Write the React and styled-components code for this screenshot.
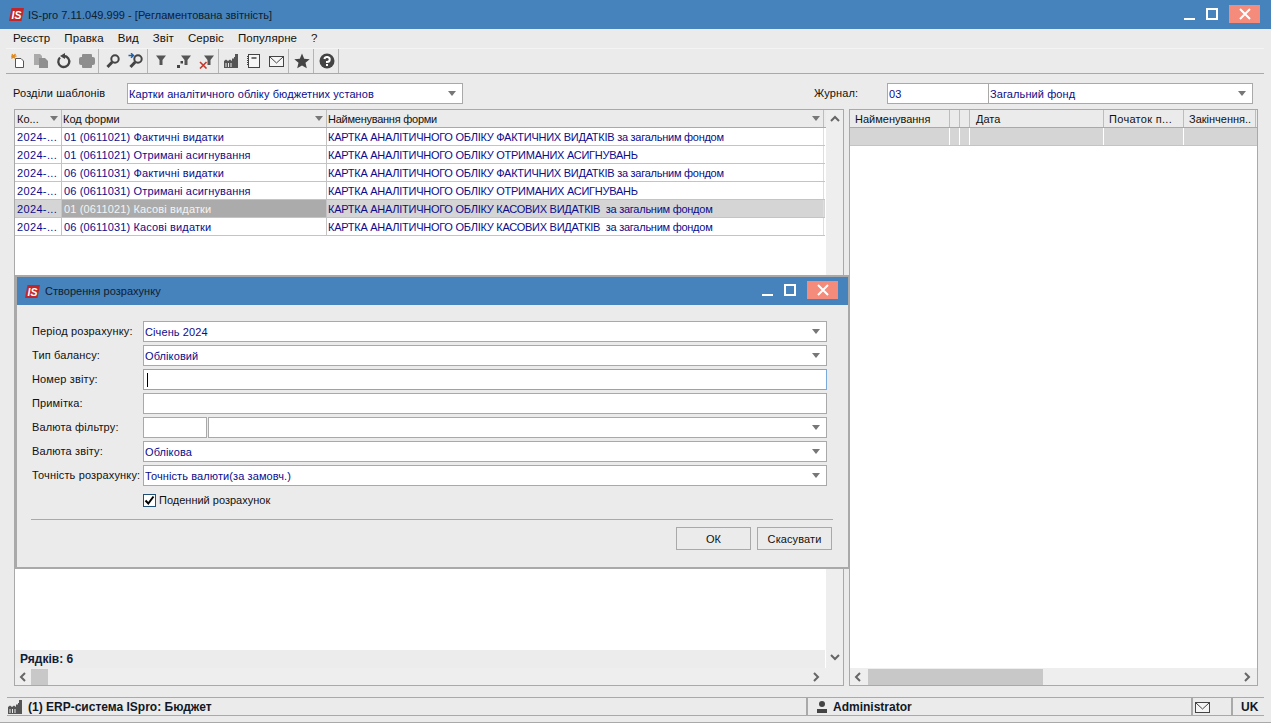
import React from 'react';
import styled, { createGlobalStyle } from 'styled-components';

const Global = createGlobalStyle`
  html, body { margin: 0; padding: 0; background: #ebebeb; overflow: hidden; }
  * { box-sizing: border-box; }
`;

const menuItems = ['Реєстр', 'Правка', 'Вид', 'Звіт', 'Сервіс', 'Популярне', '?'];

const rows = [
  ['2024-...', '01 (0611021) Фактичні видатки', 'КАРТКА АНАЛІТИЧНОГО ОБЛІКУ ФАКТИЧНИХ ВИДАТКІВ за загальним фондом'],
  ['2024-...', '01 (0611021) Отримані асигнування', 'КАРТКА АНАЛІТИЧНОГО ОБЛІКУ ОТРИМАНИХ АСИГНУВАНЬ'],
  ['2024-...', '06 (0611031) Фактичні видатки', 'КАРТКА АНАЛІТИЧНОГО ОБЛІКУ ФАКТИЧНИХ ВИДАТКІВ за загальним фондом'],
  ['2024-...', '06 (0611031) Отримані асигнування', 'КАРТКА АНАЛІТИЧНОГО ОБЛІКУ ОТРИМАНИХ АСИГНУВАНЬ'],
  ['2024-...', '01 (0611021) Касові видатки', 'КАРТКА АНАЛІТИЧНОГО ОБЛІКУ КАСОВИХ ВИДАТКІВ  за загальним фондом', true],
  ['2024-...', '06 (0611031) Касові видатки', 'КАРТКА АНАЛІТИЧНОГО ОБЛІКУ КАСОВИХ ВИДАТКІВ  за загальним фондом'],
];

const Page = styled.div`
  position: relative;
  width: 1271px;
  height: 723px;
  background: #ebebeb;
  border-bottom: 1px solid #a9a9a9;
  font-family: "Liberation Sans", Arial, sans-serif;
  font-size: 11px;
  color: #111;
  display: flex;
  flex-direction: column;
  overflow: hidden;
`;

const TitleBar = styled.div`
  height: ${p => p.$h || 29}px;
  flex: none;
  background: #4682bb;
  display: flex;
  align-items: center;
  padding-left: ${p => p.$pad || 9}px;
  gap: ${p => p.$gap || 4}px;
  font-size: 11px;
  letter-spacing: 0.03px;
  color: #10202f;
`;

const TitleText = styled.span`
  flex: 1;
  white-space: pre;
`;

const WinButtons = styled.div`
  display: flex;
  align-items: flex-start;
  align-self: flex-start;
  margin-top: ${p => p.$top || 5}px;
  margin-right: ${p => p.$right || 11}px;
`;

const WinBtn = styled.div`
  width: ${p => p.$w || 23}px;
  height: 18px;
  display: flex;
  align-items: center;
  justify-content: center;
  background: ${p => (p.$close ? '#f58b7b' : 'transparent')};
  margin-left: ${p => p.$ml || 0}px;
`;

const MenuBar = styled.div`
  height: 18px;
  flex: none;
  display: flex;
  align-items: center;
  padding-left: 13px;
  gap: 14px;
  font-size: 11.5px;
  letter-spacing: 0.08px;
`;

const ToolBar = styled.div`
  height: 25px;
  flex: none;
  margin: 1px 7px 0 6px;
  border-top: 1px solid #f4f4f4;
  display: flex;
  align-items: center;
`;

const ToolBtn = styled.div`
  width: 23px;
  height: 24px;
  display: flex;
  align-items: center;
  justify-content: center;
`;

const ToolSep = styled.div`
  width: 1px;
  height: 24px;
  background: #b5b5b5;
  margin-right: ${p => p.$r ?? 1}px;
`;

const Rule = styled.div`
  height: 1px;
  flex: none;
  margin: 0 7px 0 6px;
  background: #a9a9a9;
`;

const FilterRow = styled.div`
  flex: none;
  height: 21px;
  margin: 9px 18px 0 13px;
  display: flex;
  align-items: center;
`;

const FieldLabel = styled.span`
  width: ${p => p.$w}px;
  flex: none;
  white-space: nowrap;
  font-size: 11px;
  letter-spacing: 0.15px;
  padding-bottom: 2px;
  margin-left: ${p => p.$ml || 0}px;
`;

const Field = styled.div`
  height: ${p => p.$h || 21}px;
  width: ${p => (p.$w ? `${p.$w}px` : 'auto')};
  flex: ${p => (p.$w ? 'none' : 1)};
  background: #fff;
  border: 1px solid ${p => (p.$focus ? '#7aaadb' : '#a9a9a9')};
  color: #0c0c8c;
  display: flex;
  align-items: center;
  justify-content: space-between;
  padding: 0 6px 0 1px;
  white-space: pre;
  font-size: 11px;
  letter-spacing: 0.1px;
  margin-left: ${p => p.$ml || 0}px;
`;

const Caret = styled.i`
  width: 0;
  height: 0;
  border-left: 4px solid transparent;
  border-right: 4px solid transparent;
  border-top: 5px solid #777;
`;

const Panels = styled.div`
  flex: none;
  height: 577px;
  margin: 5px 13px 0 14px;
  display: flex;
  gap: 5px;
`;

const Panel = styled.div`
  width: ${p => p.$w}px;
  flex: none;
  border: 1px solid #a9a9a9;
  background: #fff;
  display: flex;
  position: relative;
`;

const PanelMain = styled.div`
  flex: 1;
  min-width: 0;
  display: flex;
  flex-direction: column;
`;

const GridHead = styled.div`
  height: 18px;
  flex: none;
  display: flex;
  background: #ebebeb;
  border-bottom: 1px solid #a9a9a9;
`;

const HeadCell = styled.div`
  width: ${p => p.$w}px;
  flex: none;
  height: 100%;
  padding: 0 ${p => p.$pr ?? 2}px 0 ${p => p.$pl ?? 2}px;
  border-right: 1px solid #bdbdbd;
  display: flex;
  align-items: center;
  justify-content: space-between;
  white-space: nowrap;
  overflow: hidden;
  letter-spacing: ${p => p.$ls || 0}px;
`;

const Row = styled.div`
  height: 18px;
  display: flex;
  border-bottom: 1px solid #c4c4c4;
  background: ${p => (p.$grey ? '#d5d5d5' : '#fff')};
  width: ${p => (p.$full ? 'auto' : '810px')};
`;

const Cell = styled.div`
  width: ${p => p.$w}px;
  flex: none;
  height: 100%;
  padding-left: ${p => p.$pl ?? 2}px;
  border-right: 1px solid ${p => p.$line || '#c4c4c4'};
  color: ${p => (p.$active ? '#f4f4f4' : '#0c0c8c')};
  background: ${p => (p.$active ? '#ababab' : 'transparent')};
  letter-spacing: ${p => p.$ls || 0}px;
  display: flex;
  align-items: center;
  white-space: pre;
  overflow: hidden;
`;

const Filler = styled.div`
  flex: 1;
  background: #fff;
`;

const Footer = styled.div`
  height: 18px;
  flex: none;
  width: 810px;
  background: #ececec;
  font-weight: bold;
  font-size: 12px;
  display: flex;
  align-items: center;
  padding-left: 5px;
  color: #10203a;
`;

const HScroll = styled.div`
  height: 17px;
  flex: none;
  background: #eeeeee;
  display: flex;
  align-items: center;
  justify-content: space-between;
  padding: 0 ${p => p.$pr || 3}px 0 3px;
`;

const Thumb = styled.div`
  width: ${p => p.$w}px;
  height: 16px;
  background: #c8c8c8;
  margin: 0 auto 0 ${p => p.$ml || 3}px;
`;

const VScroll = styled.div`
  width: 17px;
  flex: none;
  background: #eeeeee;
  display: flex;
  flex-direction: column;
  align-items: center;
  justify-content: space-between;
  padding: 5px 0 23px;
`;

const StatusBar = styled.div`
  flex: none;
  height: 19px;
  margin: 11px 7px 0 7px;
  border-top: 1px solid #a9a9a9;
  border-bottom: 1px solid #a9a9a9;
  display: flex;
  font-weight: bold;
  color: #101828;
`;

const StatusCell = styled.div`
  width: ${p => (p.$w ? `${p.$w}px` : 'auto')};
  flex: ${p => (p.$w ? 'none' : 1)};
  border-right: ${p => (p.$last ? 0 : '2px solid #a9a9a9')};
  display: flex;
  align-items: center;
  gap: ${p => p.$gap || 5}px;
  padding-left: ${p => p.$pl || 0}px;
  padding-top: 1px;
  font-size: ${p => p.$fs || 12}px;
`;

const Dialog = styled.div`
  position: absolute;
  left: 15px;
  top: 275px;
  width: 835px;
  height: 294px;
  background: #ebebeb;
  border: 2px solid #a9a9a9;
  display: flex;
  flex-direction: column;
`;

const DialogBody = styled.div`
  flex: 1;
  padding: 16px 21px 0 15px;
  display: flex;
  flex-direction: column;
  gap: 3px;
`;

const FormRow = styled.div`
  display: flex;
  align-items: center;
  height: 21px;
`;

const Cursor = styled.i`
  width: 1px;
  height: 14px;
  background: #000;
  margin-left: 2px;
`;

const CheckRow = styled.label`
  display: flex;
  align-items: center;
  gap: 3px;
  height: 14px;
  margin: 4px 0 0 111px;
`;

const CheckBox = styled.span`
  width: 13px;
  height: 13px;
  background: #fff;
  border: 1px solid #1f4e79;
  display: flex;
  align-items: center;
  justify-content: center;
`;

const Divider = styled.div`
  height: 1px;
  background: #a9a9a9;
  margin: 9px -6px 0 -1px;
`;

const Buttons = styled.div`
  display: flex;
  justify-content: flex-end;
  gap: 6px;
  margin: 4px -5px 0 0;
`;

const Button = styled.div`
  width: 75px;
  height: 23px;
  border: 1px solid #a9a9a9;
  display: flex;
  align-items: center;
  justify-content: center;
  letter-spacing: 0.1px;
`;

const Logo = () => (
  <svg width="15" height="13" viewBox="0 0 15 13">
    <path d="M2.5 0H15L12.5 13H0Z" fill="#c0272d" />
    <text x="2.6" y="10.5" fontFamily="Liberation Sans" fontWeight="bold" fontStyle="italic" fontSize="10.5" fill="#fff">IS</text>
  </svg>
);

const WinControls = ({ top, right }) => (
  <WinButtons $top={top} $right={right}>
    <WinBtn>
      <svg width="12" height="12" viewBox="0 0 12 12"><path d="M1 11H12" stroke="#fff" strokeWidth="2" /></svg>
    </WinBtn>
    <WinBtn>
      <svg width="12" height="12" viewBox="0 0 12 12"><rect x="1" y="1" width="10" height="10" fill="none" stroke="#fff" strokeWidth="2" /></svg>
    </WinBtn>
    <WinBtn $close $w={31} $ml={6}>
      <svg width="12" height="12" viewBox="0 0 12 12"><path d="M1 1L11 11M11 1L1 11" stroke="#fff" strokeWidth="2" /></svg>
    </WinBtn>
  </WinButtons>
);

const Chevron = ({ dir }) => {
  const d = {
    up: 'M1 6L5 2L9 6',
    down: 'M1 3L5 7L9 3',
    left: 'M7 1L3 5L7 9',
    right: 'M3 1L7 5L3 9',
  }[dir];
  return (
    <svg width="10" height="10" viewBox="0 0 10 10"><path d={d} fill="none" stroke="#666" strokeWidth="2" /></svg>
  );
};

const Factory = ({ size = 16 }) => (
  <svg width={size} height={size} viewBox="0 0 16 16">
    <path d="M1 15V8L3 6.5L5 8L7 6.5L9 8V5.5H11V4H12V1H15V15Z" fill="#555" />
    <path d="M3 10V14M5.5 10V14M8 10V14" stroke="#ebebeb" strokeWidth="1" />
  </svg>
);

const Envelope = ({ w = 15, h = 11, color = '#444' }) => (
  <svg width={w} height={h} viewBox="0 0 15 11">
    <rect x="0.5" y="0.5" width="14" height="10" fill="#f5f5f5" stroke={color} />
    <path d="M1 1L7.5 7L14 1" fill="none" stroke={color} />
  </svg>
);

const Ic = ({ children }) => <svg width="16" height="16" viewBox="0 0 16 16">{children}</svg>;

const Lens = () => (
  <>
    <circle cx="10" cy="6" r="3.7" fill="none" stroke="#444" strokeWidth="2" />
    <path d="M7.2 9L2.5 14" stroke="#444" strokeWidth="3" />
  </>
);

const Funnel = ({ x = 0 }) => <path d={`M${2 + x} 2.5H${12 + x}L${8.5 + x} 7V12H${5.5 + x}V7Z`} fill="#555" />;

const Toolbar = () => (
  <ToolBar>
    <ToolBtn>
      <Ic>
        <path d="M5.5 5.5H11L13.5 8V14.5H5.5Z" fill="#fff" stroke="#555" />
        <path d="M2 1L5 5.5M5.5 1L1.5 5.5M1 3.2H6.5" stroke="#e08a1e" strokeWidth="1.3" />
      </Ic>
    </ToolBtn>
    <ToolBtn>
      <Ic>
        <path d="M1 1H7L9 3V12H1Z" fill="#aaa" />
        <path d="M6 5H12L15 8V15H6Z" fill="#8f8f8f" />
      </Ic>
    </ToolBtn>
    <ToolBtn>
      <Ic>
        <path d="M4 4.5A5.5 5.5 0 1 0 8 3" fill="none" stroke="#444" strokeWidth="2.3" />
        <path d="M9 0V6L4 3Z" fill="#444" />
      </Ic>
    </ToolBtn>
    <ToolBtn>
      <Ic>
        <rect x="0" y="4" width="16" height="8" rx="2" fill="#8e8e8e" />
        <rect x="3" y="1" width="10" height="14" rx="1" fill="#8e8e8e" />
      </Ic>
    </ToolBtn>
    <ToolSep $r={2} />
    <ToolBtn><Ic><Lens /></Ic></ToolBtn>
    <ToolBtn>
      <Ic>
        <Lens />
        <path d="M0.5 2.5H5M3 0.3L5.5 2.5L3 4.7" fill="none" stroke="#1f5fa8" strokeWidth="1.5" />
      </Ic>
    </ToolBtn>
    <ToolSep />
    <ToolBtn><Ic><Funnel x={1} /></Ic></ToolBtn>
    <ToolBtn>
      <Ic>
        <Funnel x={3} />
        <rect x="1" y="12" width="3" height="3" fill="#444" />
        <rect x="4.5" y="8" width="2.5" height="2.5" fill="#444" />
      </Ic>
    </ToolBtn>
    <ToolBtn>
      <Ic>
        <Funnel x={3} />
        <path d="M1 9L7.5 15.5M7.5 9L1 15.5" stroke="#c0392b" strokeWidth="1.6" />
      </Ic>
    </ToolBtn>
    <ToolSep $r={0} />
    <ToolBtn><Factory /></ToolBtn>
    <ToolBtn>
      <Ic>
        <rect x="2.5" y="1.5" width="11" height="13" fill="#f6f6f6" stroke="#444" />
        <path d="M5.5 5H10.5" stroke="#444" strokeWidth="1.5" />
        <path d="M1.5 3V13" stroke="#444" strokeDasharray="1 1" />
      </Ic>
    </ToolBtn>
    <ToolBtn><Envelope /></ToolBtn>
    <ToolSep />
    <ToolBtn>
      <Ic><path d="M8 .5L10.2 5.7L15.7 6.2L11.5 9.8L12.8 15.3L8 12.4L3.2 15.3L4.5 9.8L.3 6.2L5.8 5.7Z" fill="#444" /></Ic>
    </ToolBtn>
    <ToolSep />
    <ToolBtn>
      <Ic>
        <circle cx="8" cy="8" r="7.5" fill="#444" />
        <path d="M5.4 6A2.7 2.5 0 1 1 8 9V10" fill="none" stroke="#fff" strokeWidth="2" />
        <rect x="7" y="11" width="2" height="2" fill="#fff" />
      </Ic>
    </ToolBtn>
    <ToolSep />
  </ToolBar>
);

const LeftPanel = () => (
  <Panel $w={830}>
    <PanelMain>
      <GridHead>
        <HeadCell $w={47} $pr={3}>Ко...<Caret /></HeadCell>
        <HeadCell $w={265} $pl={1} $pr={3}>Код форми<Caret /></HeadCell>
        <HeadCell $w={497} $pl={1} $pr={3} $ls={-0.25}>Найменування форми<Caret /></HeadCell>
      </GridHead>
      {rows.map(([year, code, name, selected]) => (
        <Row key={code} $grey={selected}>
          <Cell $w={47} $ls={0.35}>{year}</Cell>
          <Cell $w={265} $active={selected} $ls={0.14}>{code}</Cell>
          <Cell $w={497} $pl={1} $line="#f5d9b8" $ls={-0.26}>{name}</Cell>
        </Row>
      ))}
      <Filler />
      <Footer>Рядків: 6</Footer>
      <HScroll $pr={5}>
        <Chevron dir="left" />
        <Thumb $w={17} />
        <Chevron dir="right" />
      </HScroll>
    </PanelMain>
    <VScroll>
      <Chevron dir="up" />
      <Chevron dir="down" />
    </VScroll>
  </Panel>
);

const RightPanel = () => (
  <Panel $w={409}>
    <PanelMain>
      <GridHead>
        <HeadCell $w={100} $pl={5}>Найменування</HeadCell>
        <HeadCell $w={10} />
        <HeadCell $w={10} />
        <HeadCell $w={134} $pl={6}>Дата</HeadCell>
        <HeadCell $w={80} $pl={5} $ls={0.3}>Початок п...</HeadCell>
        <HeadCell $w={72} $pl={5}>Закінчення..</HeadCell>
      </GridHead>
      <Row $grey $full>
        <Cell $w={100} $line="#fff" />
        <Cell $w={10} $line="#fff" />
        <Cell $w={10} $line="#fff" />
        <Cell $w={134} $line="#fff" />
        <Cell $w={80} $line="#fff" />
      </Row>
      <Filler />
      <HScroll $pr={5}>
        <Chevron dir="left" />
        <Thumb $w={175} $ml={5} />
        <Chevron dir="right" />
      </HScroll>
    </PanelMain>
  </Panel>
);

const FormDialog = () => (
  <Dialog>
    <TitleBar $h={28} $pad={8} $gap={5}>
      <Logo />
      <TitleText>Створення розрахунку</TitleText>
      <WinControls top={4} right={10} />
    </TitleBar>
    <DialogBody>
      <FormRow>
        <FieldLabel $w={111}>Період розрахунку:</FieldLabel>
        <Field>Січень 2024<Caret /></Field>
      </FormRow>
      <FormRow>
        <FieldLabel $w={111}>Тип балансу:</FieldLabel>
        <Field>Обліковий<Caret /></Field>
      </FormRow>
      <FormRow>
        <FieldLabel $w={111}>Номер звіту:</FieldLabel>
        <Field $focus><Cursor /></Field>
      </FormRow>
      <FormRow>
        <FieldLabel $w={111}>Примітка:</FieldLabel>
        <Field />
      </FormRow>
      <FormRow>
        <FieldLabel $w={111}>Валюта фільтру:</FieldLabel>
        <Field $w={64} />
        <Field $ml={1}><span /><Caret /></Field>
      </FormRow>
      <FormRow>
        <FieldLabel $w={111}>Валюта звіту:</FieldLabel>
        <Field>Облікова<Caret /></Field>
      </FormRow>
      <FormRow>
        <FieldLabel $w={111}>Точність розрахунку:</FieldLabel>
        <Field>Точність валюти(за замовч.)<Caret /></Field>
      </FormRow>
      <CheckRow>
        <CheckBox>
          <svg width="11" height="11" viewBox="0 0 11 11"><path d="M1.5 5.5L4.3 8.5L9.5 1.5" fill="none" stroke="#000" strokeWidth="2" /></svg>
        </CheckBox>
        Поденний розрахунок
      </CheckRow>
      <Divider />
      <Buttons>
        <Button>ОК</Button>
        <Button>Скасувати</Button>
      </Buttons>
    </DialogBody>
  </Dialog>
);

export default function App() {
  return (
    <Page>
      <Global />
      <TitleBar>
        <Logo />
        <TitleText>IS-pro 7.11.049.999 - [Регламентована звітність]</TitleText>
        <WinControls />
      </TitleBar>
      <MenuBar>
        {menuItems.map(item => <span key={item}>{item}</span>)}
      </MenuBar>
      <Toolbar />
      <Rule />
      <FilterRow>
        <FieldLabel $w={114}>Розділи шаблонів</FieldLabel>
        <Field $w={336}>Картки аналітичного обліку бюджетних установ<Caret /></Field>
        <FieldLabel $w={73} $ml={351}>Журнал:</FieldLabel>
        <Field $w={102}>03</Field>
        <Field $w={265} $ml={-1}>Загальний фонд<Caret /></Field>
      </FilterRow>
      <Panels>
        <LeftPanel />
        <RightPanel />
      </Panels>
      <StatusBar>
        <StatusCell $w={801}><Factory />(1) ERP-система ISpro: Бюджет</StatusCell>
        <StatusCell $w={385} $pl={8}>
          <svg width="12" height="14" viewBox="0 0 12 14"><circle cx="6" cy="4" r="3" fill="#444" /><path d="M1 13V9H11V13Z" fill="#444" /></svg>
          Administrator
        </StatusCell>
        <StatusCell $w={40} $pl={2}><Envelope /></StatusCell>
        <StatusCell $last $pl={8}>UK</StatusCell>
      </StatusBar>
      <FormDialog />
    </Page>
  );
}
